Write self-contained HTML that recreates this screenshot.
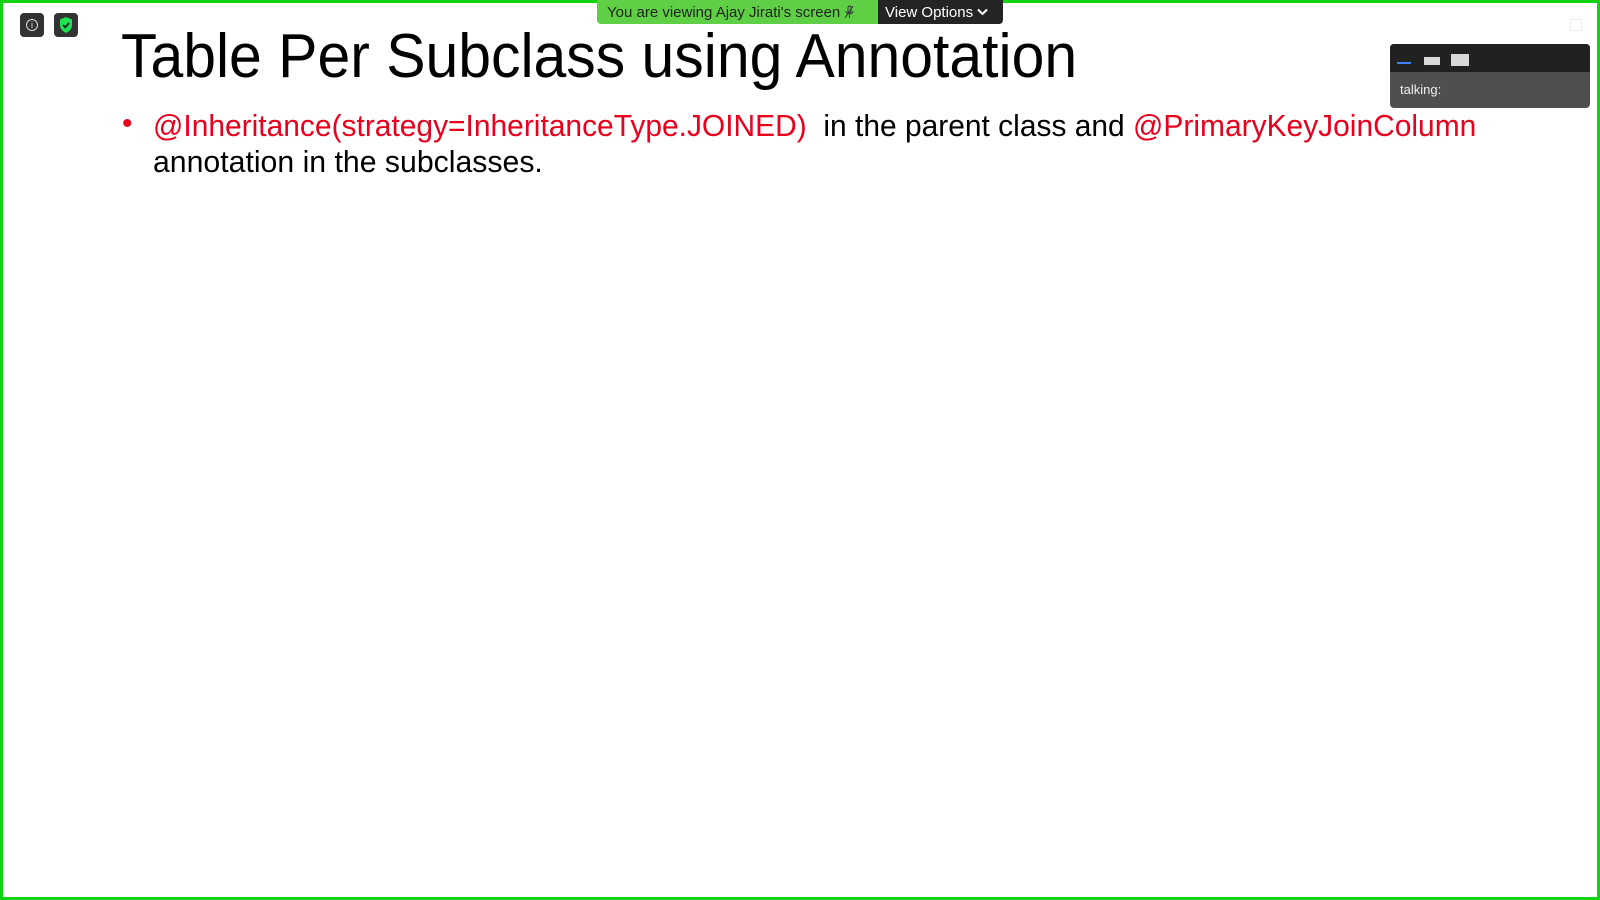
<!DOCTYPE html>
<html><head><meta charset="utf-8"><style>
html,body{margin:0;padding:0;}
body{width:1600px;height:900px;position:relative;overflow:hidden;background:#fff;font-family:"Liberation Sans",sans-serif;}
.border{position:absolute;left:0;top:0;width:1594px;height:894px;border:3px solid #0fd40f;}
.ban{position:absolute;top:0;height:24px;font-size:15px;line-height:25px;}
.t{position:absolute;white-space:nowrap;transform-origin:0 0;}
.red{color:#e8001c}
</style></head><body>
<div class="border"></div>
<div style="position:absolute;left:20px;top:13px;width:24px;height:24px;background:#333;border-radius:4px"></div>
<div style="position:absolute;left:26px;top:19px;width:10px;height:10px;border:1.5px solid #ddd;border-radius:50%;color:#ddd;font-size:9px;line-height:10px;text-align:center">i</div>
<div style="position:absolute;left:54px;top:13px;width:24px;height:24px;background:#333;border-radius:4px"></div>
<svg style="position:absolute;left:58px;top:16px" width="16" height="18" viewBox="0 0 16 18"><path d="M8 1 L14 3.5 V9 C14 13 11 15.5 8 17 C5 15.5 2 13 2 9 V3.5 Z" fill="#1ee34f"/><path d="M5 9 L7.3 11.3 L11 7" stroke="#222" stroke-width="1.8" fill="none"/></svg>
<div class="ban" style="left:597px;width:281px;background:#5fd046;color:#222;border-radius:0 0 0 4px;padding-left:10px;box-sizing:border-box">You are viewing Ajay Jirati's screen <svg width="10" height="14" viewBox="0 0 10 14" style="vertical-align:-2px"><rect x="4" y="1" width="3" height="7" rx="1.5" fill="none" stroke="#333"/><path d="M2 6 C2 10 9 10 9 6 M5.5 10 V13 M1 13 L9 1" stroke="#333" fill="none"/></svg></div>
<div class="ban" style="left:878px;width:125px;background:#242424;color:#fff;border-radius:0 0 4px 0;padding-left:7px;box-sizing:border-box">View Options <svg width="11" height="8" viewBox="0 0 11 8" style="vertical-align:1px"><path d="M1 1.5 L5.5 6 L10 1.5" stroke="#fff" stroke-width="2" fill="none"/></svg></div>
<div style="position:absolute;left:1570px;top:19px;width:10px;height:10px;border:1px solid #eee"></div>
<div style="position:absolute;left:1390px;top:44px;width:200px;height:64px;border-radius:4px;overflow:hidden;background:#4f4f4f">
<div style="height:28px;background:#212121;position:relative">
<div style="position:absolute;left:7px;top:18px;width:14px;height:2px;background:#3b82f6"></div>
<div style="position:absolute;left:34px;top:13px;width:16px;height:8px;background:#d8d8d8"></div>
<div style="position:absolute;left:61px;top:10px;width:18px;height:12px;background:#d8d8d8"></div>
</div>
<div style="color:#eee;font-size:13px;padding:10px 10px">talking:</div>
</div>
<div class="t" style="left:121px;top:21px;font-size:62px;transform:scaleX(0.95)">Table Per Subclass using Annotation</div>
<div class="t red" style="left:122px;top:107px;font-size:30px">•</div>
<div class="t" style="left:153px;top:108px;font-size:31px;transform:scaleX(0.966)"><span class="red">@Inheritance(strategy=InheritanceType.JOINED)</span>&nbsp; in the parent class and <span class="red">@PrimaryKeyJoinColumn</span></div>
<div class="t" style="left:153px;top:144px;font-size:31px;transform:scaleX(0.975)">annotation in the subclasses.</div>
</body></html>
